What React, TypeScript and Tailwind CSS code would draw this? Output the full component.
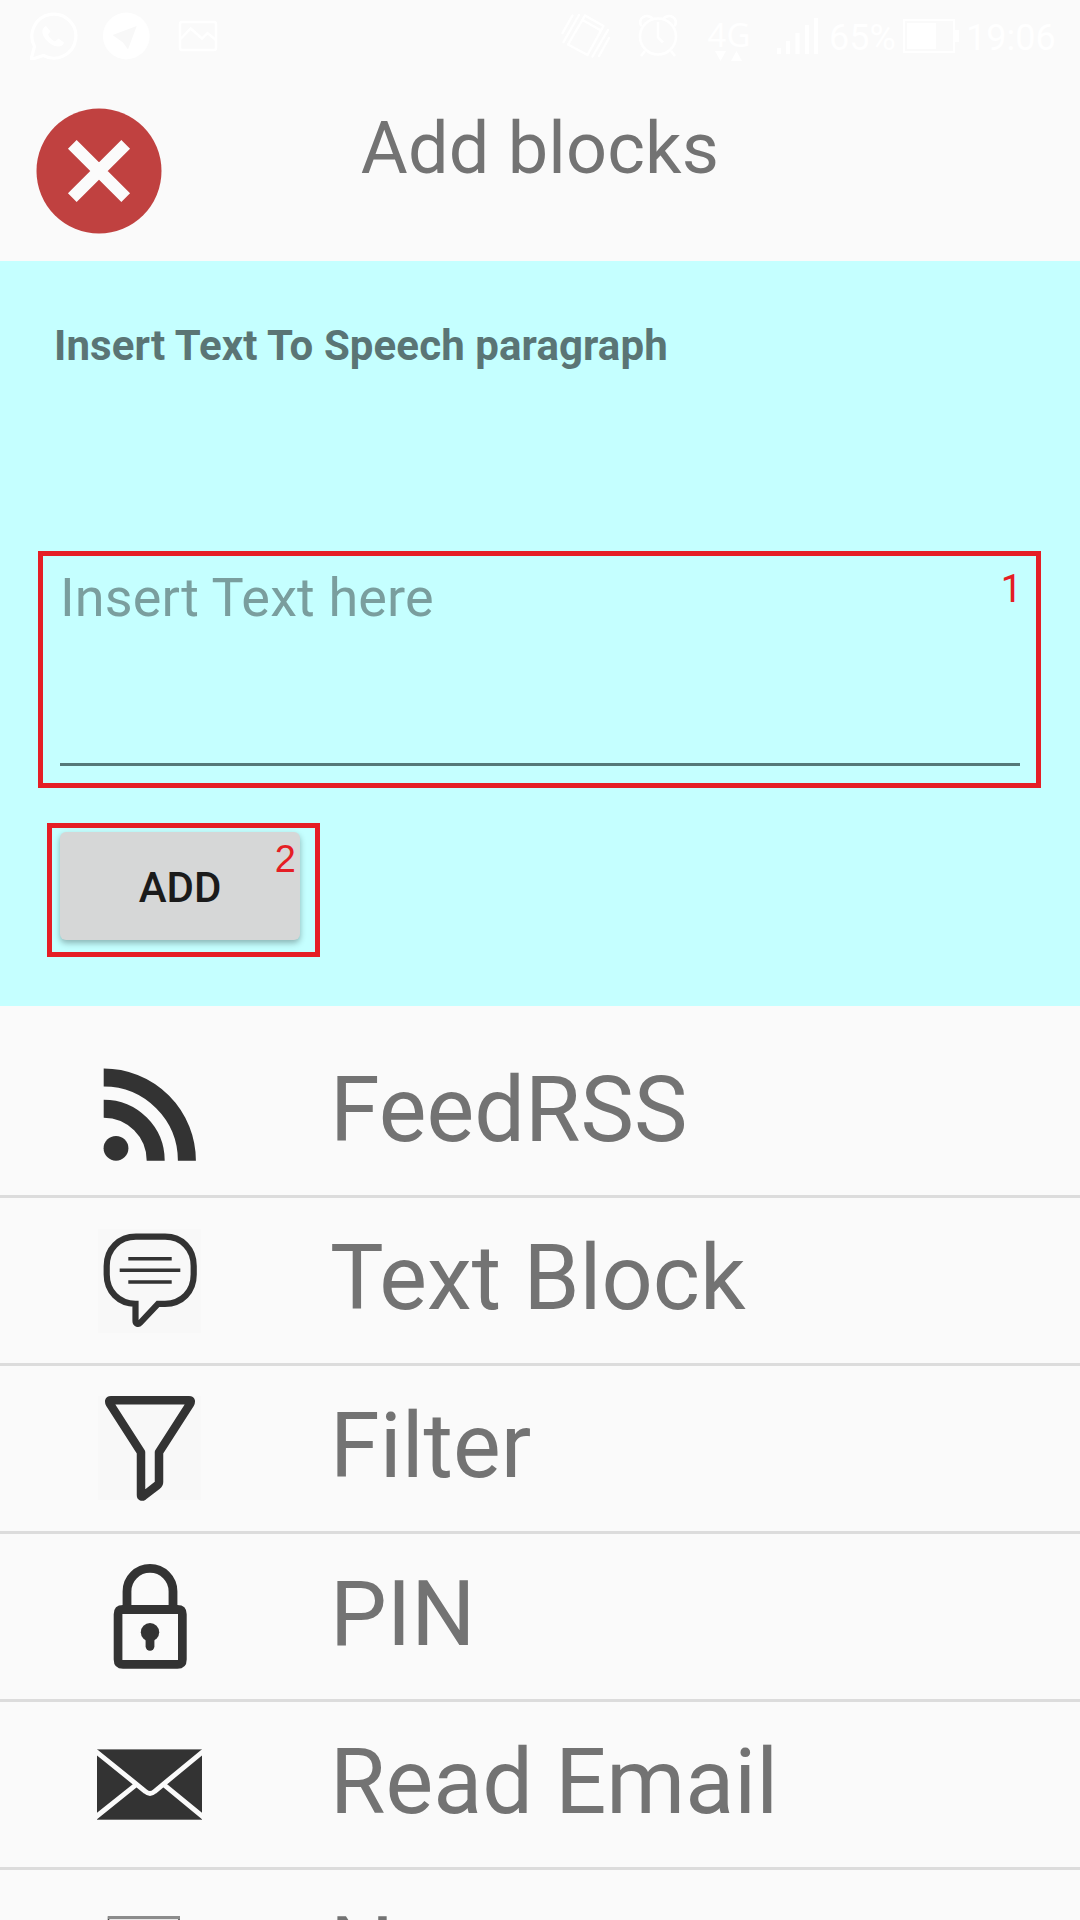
import React from 'react';

const INK = '#333333';

function WhatsAppIcon() {
  return (
    <svg className="h-12 w-12" viewBox="30 12 48 48" fill="none">
      <path d="M31 59.5 34.5 46.500A22 22 0 1 1 43.500 55.500Z" stroke="#fff" strokeWidth="3.2" strokeLinejoin="round" />
      <path
        d="M46 26c-3 1.500-4 4-3.500 7 1.500 6.500 8 12.500 15 13.500 3 .3 6-1 6.500-4l-5.500-4-3.500 3c-3.500-1.500-5.500-4-7-7l2.500-3Z"
        fill="#fff"
      />
    </svg>
  );
}

function TelegramIcon() {
  return (
    <svg className="h-12 w-12" viewBox="102 12 48 48">
      <circle cx="126.3" cy="36" r="23.400" fill="#fff" />
      <path d="M112.500 35 136.700 26 128 49.500 123 42.500Z" fill="#f8f8f8" />
    </svg>
  );
}

function PictureIcon() {
  return (
    <svg className="h-12 w-[42px]" viewBox="177 12 42 48" fill="none" stroke="#fff" strokeWidth="2.400">
      <rect x="180" y="22" width="36" height="28" rx="2" />
      <path d="m180 39.500 10.700-11 11.300 10 5.500-5.500 9 7.500" />
    </svg>
  );
}

function VibrateIcon() {
  return (
    <svg className="h-12 w-[52px]" viewBox="560 12 52 48" fill="none" stroke="#fff" strokeWidth="2.400" strokeLinecap="round">
      <path d="M585 15.500 603.500 26 587.500 55 568 44.500ZM582.500 20 601 30.500" strokeLinejoin="round" />
      <path d="M579 15 563.500 42M572.500 15.500 562.500 33M592.500 56.500 608 30M599 56 609 38" />
    </svg>
  );
}

function AlarmIcon() {
  return (
    <svg className="h-12 w-11" viewBox="636 12 44 48" fill="none" stroke="#fff" strokeWidth="2.600">
      <circle cx="658" cy="36.500" r="18" />
      <path d="M658 22v15.500l5 5M645 51l-4 5M671 51l4 5M641.500 26c-5-7 5-14 11.500-7M674.500 26c5-7-5-14-11.500-7" />
    </svg>
  );
}

function SignalIcon() {
  return (
    <svg className="h-10 w-[42px]" viewBox="777 16 42 40" fill="#fff">
      <path d="M777 48h4v6h-4zM786 41h4v13h-4zM795.500 33h4v21h-4zM805 25h4v29h-4zM814 18h4v36h-4z" />
    </svg>
  );
}

function StatusBar() {
  return (
    <div className="flex h-[72px] items-center text-white">
      <div className="ml-[30px] flex items-center">
        <WhatsAppIcon />
        <div className="ml-6">
          <TelegramIcon />
        </div>
        <div className="ml-[27px]">
          <PictureIcon />
        </div>
      </div>
      <div className="ml-auto flex items-center pr-6">
        <VibrateIcon />
        <div className="ml-6">
          <AlarmIcon />
        </div>
        <div className="ml-[26px] flex w-[46px] flex-col items-center pt-[7px]">
          <span className="font-['Noto_Sans'] text-[33px] leading-[32px]">4G</span>
          <svg className="h-[10px] w-[28px]" viewBox="0 0 28 10" fill="#fff">
            <path d="M0 0h11L5.500 10zM16 10h11L21.500 0z" />
          </svg>
        </div>
        <div className="ml-[25px]">
          <SignalIcon />
        </div>
        <span className="ml-[10px] w-[66px] pt-[3px] text-[36px] leading-[42px]">65%</span>
        <div className="ml-2 flex items-center">
          <div className="h-[34px] w-[52px] border-2 border-white p-[2px]">
            <div className="h-full w-[29px] bg-white" />
          </div>
          <div className="h-3 w-1 bg-white" />
        </div>
        <span className="ml-[7px] w-[90px] pt-[3px] text-[36px] leading-[42px]">19:06</span>
      </div>
    </div>
  );
}

function CloseIcon() {
  return (
    <svg className="h-[126px] w-[126px]" viewBox="36 108 126 126">
      <circle cx="99" cy="171" r="62.500" fill="#c04140" />
      <path d="m72.300 144.300 53.400 53.400M125.700 144.300 72.300 197.700" stroke="#fbfbfb" strokeWidth="12.300" />
    </svg>
  );
}

function RssIcon() {
  return (
    <svg className="h-full w-full" viewBox="0 0 105 105" fill="none" stroke={INK} strokeWidth="18">
      <circle cx="19" cy="88.300" r="12.400" fill={INK} stroke="none" />
      <path d="M6.700 48.700a52 52 0 0 1 52 52M6.700 17.500a83.200 83.200 0 0 1 83.200 83.200" />
    </svg>
  );
}

function BubbleIcon() {
  return (
    <svg className="h-full w-full" viewBox="0 0 105 105" fill="none" stroke={INK}>
      <rect x="1" y="1" width="103" height="104" fill="#f8f8f8" stroke="none" />
      <path
        d="M38.500 75.800C22 75.800 9.700 63.500 9.700 46.500V38C9.700 21 22 8.700 39 8.700H68C85 8.700 96.700 21 96.700 38v8.500C96.700 63.500 85 75.800 68 75.800H61L43 95C41.500 96.600 38.500 96 38.500 93Z"
        strokeWidth="6.200"
      />
      <path d="M31.300 30.700h43.400M22.700 42.300h60.600M31.300 54h43.400" strokeWidth="3.400" />
    </svg>
  );
}

function FilterIcon() {
  return (
    <svg className="h-full w-full" viewBox="0 0 105 105" fill="none" stroke={INK}>
      <rect x="1" width="103" height="104" fill="#f8f8f8" stroke="none" />
      <path
        d="M14 4.300H92Q95 4.300 93 8L62 56.300V86Q62 88 60 89.500L46.500 100Q44 101.500 44 99V56.300L13 8Q11 4.300 14 4.300Z"
        strokeWidth="8.500"
        strokeLinejoin="round"
      />
    </svg>
  );
}

function LockIcon() {
  return (
    <svg className="h-full w-full" viewBox="0 0 105 105" fill="none" stroke={INK} strokeWidth="8.800">
      <path d="M30 43V27.400a23 23 0 0 1 46 0V43" />
      <path
        fillRule="evenodd"
        fill={INK}
        stroke="none"
        d="M26 41H80.400Q89.700 41 89.700 50.300V95.400Q89.700 104.700 80.400 104.700H26Q16.700 104.700 16.700 95.400V50.300Q16.700 41 26 41ZM25.400 50V96H81V50Z"
      />
      <circle cx="53" cy="68.300" r="9.200" fill={INK} stroke="none" />
      <path d="M53 68v14.300" strokeLinecap="round" />
    </svg>
  );
}

function MailIcon() {
  return (
    <svg className="h-full w-full" viewBox="0 0 105 105" fill="none" stroke="#fafafa" strokeWidth="4.900">
      <rect y="17.400" width="105" height="70.300" fill={INK} stroke="none" />
      <path d="M-2 18.700 48.500 59.500Q53 63.500 57.500 59.500L107 18.700M-2 85.600 39.500 52.300M107 85.600 66.500 52.300" />
    </svg>
  );
}

function NewspaperIcon() {
  return (
    <svg className="h-full w-full" viewBox="0 0 105 105">
      <rect x="11.500" y="17" width="70.500" height="87" fill="#e9e9e9" stroke="#444" strokeWidth="1.500" />
      <path d="M11 17.500h72" stroke="#8c8c8c" strokeWidth="3" />
    </svg>
  );
}

const BLOCKS = [
  { label: 'FeedRSS', Icon: RssIcon },
  { label: 'Text Block', Icon: BubbleIcon },
  { label: 'Filter', Icon: FilterIcon },
  { label: 'PIN', Icon: LockIcon },
  { label: 'Read Email', Icon: MailIcon },
  { label: 'News', Icon: NewspaperIcon },
];

export default function App() {
  return (
    <main className="h-[1920px] w-[1080px] overflow-hidden bg-[#fafafa] font-[Roboto,sans-serif] text-[#737373]">
      <header className="h-[261px]">
        <StatusBar />
        <div className="grid grid-cols-[162px_1fr_162px] pt-9">
          <button className="ml-9 h-[126px] w-[126px]" aria-label="Close">
            <CloseIcon />
          </button>
          <h1 className="-mt-px text-center text-[72px] leading-[84px] tracking-[0.2px]">Add blocks</h1>
        </div>
      </header>

      <section className="h-[745px] bg-[#c5ffff] pt-[60px]">
        <h2 className="ml-[54px] text-[42px] leading-[49px] font-bold tracking-[0.1px] text-[#5a7575]">
          Insert Text To Speech paragraph
        </h2>
        <div className="relative mt-[181px] ml-[38px] h-[237px] w-[1003px] border-[5px] border-[#e51e25] pt-[10px] pr-4 pl-[17px]">
          <div className="h-[200px] border-b-[3px] border-[#557878] text-[54px] leading-[64px] tracking-[0.14px] text-[#7a9e9e]">
            Insert Text here
          </div>
          <span className="absolute top-[12px] right-[14px] text-[38px] leading-[42px] text-[#e51e25]">1</span>
        </div>
        <div className="relative mt-[35px] ml-[47px] h-[134px] w-[273px] border-[5px] border-[#e51e25] pt-1 pl-2">
          <button className="flex h-[108px] w-[240px] items-center justify-center rounded-md bg-[#d6d7d7] pt-[3px] text-[42px] leading-[49px] font-medium text-[#1b1b1b] shadow-[0_3px_6px_rgba(0,0,0,0.3)]">
            ADD
          </button>
          <span className="absolute top-[10px] right-[19px] font-['Liberation_Sans'] text-[38px] leading-[42px] text-[#e51e25]">2</span>
        </div>
      </section>

      <ul className="pt-6">
        {BLOCKS.map(({ label, Icon }) => (
          <li key={label} className="flex h-[168px] items-center border-b-[3px] border-[#dcdcdc] pl-[97px]">
            <div className="h-[105px] w-[105px]">
              <Icon />
            </div>
            <span className="ml-32 pb-1 text-[90px] leading-[105px]">{label}</span>
          </li>
        ))}
      </ul>
    </main>
  );
}
